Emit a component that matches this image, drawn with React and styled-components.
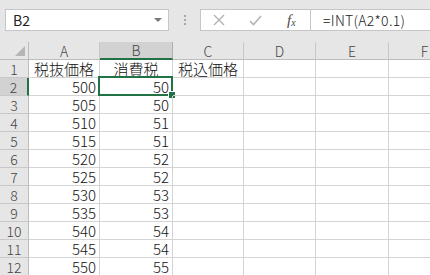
import React from 'react';
import styled, { createGlobalStyle } from 'styled-components';

const GlobalStyle = createGlobalStyle`
  html, body {
    margin: 0;
    padding: 0;
    background: #ffffff;
  }
  * {
    box-sizing: border-box;
  }
`;

const jpFont = `"Noto Sans CJK JP", "Noto Sans", sans-serif`;

const columns = ['A', 'B', 'C', 'D', 'E', 'F'];
const colWidths = [71, 73, 71, 72, 73, 72];

const rows = Array.from({ length: 11 }, (_, i) => {
  const price = 500 + i * 5;
  return { price, tax: Math.floor(price * 0.1) };
});

const App = () => (
  <>
    <GlobalStyle />
    <Window>
      <FormulaBar>
        <NameBox>
          <NameText>B2</NameText>
          <DropArrow />
        </NameBox>
        <Grip>
          <Dot />
          <Dot />
          <Dot />
        </Grip>
        <EditBox>
          <ButtonArea>
            <IconSlot>
              <svg width="12" height="12" viewBox="0 0 12 12">
                <path d="M1 1 L11 11 M11 1 L1 11" stroke="#b3b3b3" strokeWidth="1.4" fill="none" />
              </svg>
            </IconSlot>
            <IconSlot>
              <svg width="13" height="11" viewBox="0 0 13 11">
                <path d="M1 6 L4.5 9.5 L12 1" stroke="#b3b3b3" strokeWidth="1.6" fill="none" />
              </svg>
            </IconSlot>
            <FxIcon>
              f<sub>x</sub>
            </FxIcon>
          </ButtonArea>
          <FormulaText>=INT(A2*0.1)</FormulaText>
        </EditBox>
      </FormulaBar>

      <Sheet $cols={colWidths}>
        <Corner>
          <CornerTriangle />
        </Corner>
        {columns.map(c => (
          <ColHeader key={c} $active={c === 'B'}>
            {c}
          </ColHeader>
        ))}

        <RowHeader>1</RowHeader>
        <Cell $align="center">税抜価格</Cell>
        <Cell $align="center">消費税</Cell>
        <Cell $align="center">税込価格</Cell>
        <Cell />
        <Cell />
        <Cell />

        {rows.map((r, i) => {
          const rowNo = i + 2;
          const selected = rowNo === 2;
          return (
            <React.Fragment key={rowNo}>
              <RowHeader $active={selected}>{rowNo}</RowHeader>
              <Cell $align="right">{r.price}</Cell>
              <Cell $align="right">
                {r.tax}
                {selected && (
                  <Selection>
                    <FillHandle />
                  </Selection>
                )}
              </Cell>
              <Cell />
              <Cell />
              <Cell />
              <Cell />
            </React.Fragment>
          );
        })}
      </Sheet>
    </Window>
  </>
);

export default App;

const Window = styled.div`
  width: 430px;
  height: 275px;
  overflow: hidden;
  background: #ffffff;
`;

const FormulaBar = styled.div`
  height: 42px;
  background: #e6e6e6;
  display: flex;
  align-items: flex-start;
  padding: 9px 0 0 5px;
`;

const NameBox = styled.div`
  width: 164px;
  height: 22px;
  background: #ffffff;
  border: 1px solid #c6c6c6;
  display: flex;
  align-items: center;
  justify-content: space-between;
  padding: 0 6px 0 7px;
`;

const NameText = styled.span`
  font-family: ${jpFont};
  font-size: 14px;
  color: #222;
`;

const DropArrow = styled.span`
  width: 0;
  height: 0;
  border-left: 4px solid transparent;
  border-right: 4px solid transparent;
  border-top: 4px solid #7a7a7a;
`;

const Grip = styled.div`
  width: 31px;
  height: 22px;
  display: flex;
  flex-direction: column;
  align-items: center;
  justify-content: center;
  gap: 2px;
`;

const Dot = styled.span`
  width: 2px;
  height: 2px;
  background: #a8a8a8;
`;

const EditBox = styled.div`
  flex: 1;
  height: 22px;
  background: #ffffff;
  border: 1px solid #c6c6c6;
  border-right: none;
  display: flex;
  align-items: center;
`;

const ButtonArea = styled.div`
  width: 110px;
  height: 100%;
  border-right: 1px solid #c6c6c6;
  display: flex;
  align-items: center;
  padding-left: 12px;
`;

const IconSlot = styled.span`
  width: 36px;
  display: flex;
  align-items: center;
`;

const FxIcon = styled.span`
  font-family: "Liberation Serif", serif;
  font-style: italic;
  font-size: 15px;
  color: #4a4a4a;
  line-height: 1;
  margin-left: 2px;

  sub {
    font-size: 10px;
    vertical-align: -1px;
  }
`;

const FormulaText = styled.span`
  font-family: ${jpFont};
  font-weight: 300;
  font-size: 14px;
  letter-spacing: 0.3px;
  color: #222;
  padding-left: 12px;
  white-space: nowrap;
`;

const Sheet = styled.div`
  display: grid;
  grid-template-columns: 29px ${p => p.$cols.map(w => `${w}px`).join(' ')};
  grid-auto-rows: 18px;
`;

const Corner = styled.div`
  background: #e6e6e6;
  border-right: 1px solid #bdbdbd;
  border-bottom: 1px solid #bdbdbd;
  display: flex;
  align-items: flex-end;
  justify-content: flex-end;
  padding: 0 3px 3px 0;
`;

const CornerTriangle = styled.span`
  width: 0;
  height: 0;
  border-left: 10px solid transparent;
  border-bottom: 10px solid #b5b5b5;
`;

const ColHeader = styled.div`
  background: ${p => (p.$active ? '#d2d2d2' : '#e6e6e6')};
  border-right: 1px solid ${p => (p.$active ? '#b0b0b0' : '#c8c8c8')};
  border-bottom: ${p => (p.$active ? '2px solid #217346' : '1px solid #bdbdbd')};
  font-family: ${jpFont};
  font-weight: 300;
  font-size: 14px;
  color: #444;
  display: flex;
  align-items: center;
  justify-content: center;
  line-height: 1;
`;

const RowHeader = styled.div`
  background: ${p => (p.$active ? '#d2d2d2' : '#e6e6e6')};
  border-right: ${p => (p.$active ? '2px solid #217346' : '1px solid #bdbdbd')};
  border-bottom: 1px solid #c8c8c8;
  font-family: ${jpFont};
  font-weight: 300;
  font-size: 14px;
  color: #444;
  display: flex;
  align-items: center;
  justify-content: center;
  line-height: 1;
`;

const Cell = styled.div`
  position: relative;
  border-right: 1px solid #d4d4d4;
  border-bottom: 1px solid #d4d4d4;
  font-family: ${jpFont};
  font-weight: 300;
  font-size: 15px;
  color: #111;
  display: flex;
  align-items: center;
  justify-content: ${p =>
    p.$align === 'right' ? 'flex-end' : p.$align === 'center' ? 'center' : 'flex-start'};
  padding: 0 3px;
  line-height: 1;
  white-space: nowrap;
`;

const Selection = styled.span`
  position: absolute;
  top: -2px;
  left: -2px;
  right: -1px;
  bottom: -1px;
  border: 2px solid #217346;
  pointer-events: none;
`;

const FillHandle = styled.span`
  position: absolute;
  right: -5px;
  bottom: -5px;
  width: 8px;
  height: 8px;
  background: #217346;
  border: 1px solid #ffffff;
`;
